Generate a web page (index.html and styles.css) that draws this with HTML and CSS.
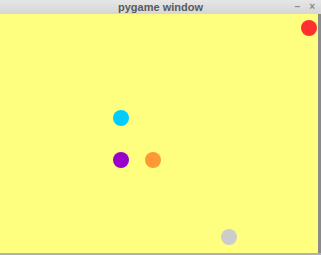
FILE: index.html
```html
<!DOCTYPE html>
<html lang="en">
<head>
  <meta charset="UTF-8" />
  <title>pygame window</title>
  <link rel="stylesheet" href="styles.css">
</head>
<body>
<div class="window">
  <div class="titlebar">
    <span class="title">pygame window</span>
    <span class="controls"><span class="min">–</span><span class="close">×</span></span>
  </div>
  <div class="frame">
    <div class="canvas">
      <div class="ball red" style="left:301px;top:6px"></div>
      <div class="ball cyan" style="left:113px;top:96px"></div>
      <div class="ball purple" style="left:113px;top:138px"></div>
      <div class="ball orange" style="left:145px;top:138px"></div>
      <div class="ball grey" style="left:221px;top:215px"></div>
    </div>
    <div class="edge"></div>
  </div>
  <div class="bottom"></div>
</div>
</body>
</html>
```
FILE: styles.css
```css
html, body { margin: 0; padding: 0; background: #b8b8b8; }
.window { width: 321px; height: 255px; display: flex; flex-direction: column; font-family: "Liberation Sans", Arial, sans-serif; }
.titlebar { height: 14px; background: linear-gradient(#e6e6e6, #d6d6d6); position: relative; display: flex; justify-content: center; align-items: center; }
.title { font-size: 11px; font-weight: bold; color: #5a5a5a; line-height: 14px; }
.controls { position: absolute; right: 6px; top: 0; display: flex; gap: 9px; font-size: 10px; color: #8a8a8a; line-height: 13px; font-weight: bold; }
.frame { flex: 1; display: flex; }
.canvas { flex: 1; background: #ffff7f; position: relative; }
.edge { width: 3px; background: #8a8a8a; }
.bottom { height: 2px; background: #b0b0b0; }
.ball { position: absolute; width: 16px; height: 16px; border-radius: 50%; }
.red { background: #ff3030; }
.cyan { background: #00ccff; }
.purple { background: #9900cc; }
.orange { background: #ff9933; }
.grey { background: #cccccc; }
```
